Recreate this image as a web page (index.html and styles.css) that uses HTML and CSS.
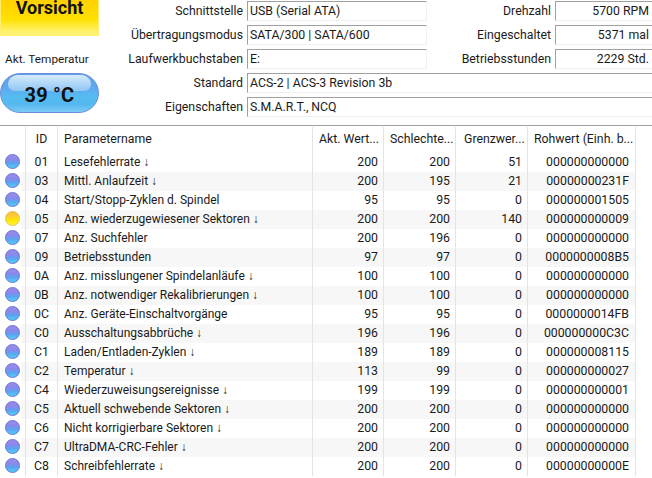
FILE: index.html
```html
<!DOCTYPE html>
<html lang="de">
<head>
<meta charset="utf-8">
<title>Laufwerk</title>
<link rel="stylesheet" href="styles.css">
</head>
<body>
<div class="top">
  <div class="status">
    <div class="health">Vorsicht</div>
    <div class="temp-label">Akt. Temperatur</div>
    <div class="temp"><span class="temp-text">39 °C</span></div>
  </div>
  <div class="info">
    <div class="info-row">
      <span class="lab">Schnittstelle</span><span class="field mid">USB (Serial ATA)</span>
      <span class="lab lab2">Drehzahl</span><span class="field num">5700 RPM</span>
    </div>
    <div class="info-row">
      <span class="lab">Übertragungsmodus</span><span class="field mid">SATA/300 | SATA/600</span>
      <span class="lab lab2">Eingeschaltet</span><span class="field num">5371 mal</span>
    </div>
    <div class="info-row">
      <span class="lab">Laufwerkbuchstaben</span><span class="field mid">E:</span>
      <span class="lab lab2">Betriebsstunden</span><span class="field num">2229 Std.</span>
    </div>
    <div class="info-row">
      <span class="lab">Standard</span><span class="field wide">ACS-2 | ACS-3 Revision 3b</span>
    </div>
    <div class="info-row">
      <span class="lab">Eigenschaften</span><span class="field wide">S.M.A.R.T., NCQ</span>
    </div>
  </div>
</div>
<div class="table">
  <div class="row head">
    <span class="c dot-c"></span><span class="c id">ID</span><span class="c name">Parametername</span><span class="c v1 r">Akt. Wert...</span><span class="c v2">Schlechte...</span><span class="c v3">Grenzwer...</span><span class="c raw">Rohwert (Einh. b...</span>
  </div>
  <div class="row"><span class="c dot-c"><i class="dot"></i></span><span class="c id">01</span><span class="c name">Lesefehlerrate ↓</span><span class="c v1 r">200</span><span class="c v2 r">200</span><span class="c v3 r">51</span><span class="c raw r">000000000000</span></div>
  <div class="row alt"><span class="c dot-c"><i class="dot"></i></span><span class="c id">03</span><span class="c name">Mittl. Anlaufzeit ↓</span><span class="c v1 r">200</span><span class="c v2 r">195</span><span class="c v3 r">21</span><span class="c raw r">00000000231F</span></div>
  <div class="row"><span class="c dot-c"><i class="dot"></i></span><span class="c id">04</span><span class="c name">Start/Stopp-Zyklen d. Spindel</span><span class="c v1 r">95</span><span class="c v2 r">95</span><span class="c v3 r">0</span><span class="c raw r">000000001505</span></div>
  <div class="row alt"><span class="c dot-c"><i class="dot warn"></i></span><span class="c id">05</span><span class="c name">Anz. wiederzugewiesener Sektoren ↓</span><span class="c v1 r">200</span><span class="c v2 r">200</span><span class="c v3 r">140</span><span class="c raw r">000000000009</span></div>
  <div class="row"><span class="c dot-c"><i class="dot"></i></span><span class="c id">07</span><span class="c name">Anz. Suchfehler</span><span class="c v1 r">200</span><span class="c v2 r">196</span><span class="c v3 r">0</span><span class="c raw r">000000000000</span></div>
  <div class="row alt"><span class="c dot-c"><i class="dot"></i></span><span class="c id">09</span><span class="c name">Betriebsstunden</span><span class="c v1 r">97</span><span class="c v2 r">97</span><span class="c v3 r">0</span><span class="c raw r">0000000008B5</span></div>
  <div class="row"><span class="c dot-c"><i class="dot"></i></span><span class="c id">0A</span><span class="c name">Anz. misslungener Spindelanläufe ↓</span><span class="c v1 r">100</span><span class="c v2 r">100</span><span class="c v3 r">0</span><span class="c raw r">000000000000</span></div>
  <div class="row alt"><span class="c dot-c"><i class="dot"></i></span><span class="c id">0B</span><span class="c name">Anz. notwendiger Rekalibrierungen ↓</span><span class="c v1 r">100</span><span class="c v2 r">100</span><span class="c v3 r">0</span><span class="c raw r">000000000000</span></div>
  <div class="row"><span class="c dot-c"><i class="dot"></i></span><span class="c id">0C</span><span class="c name">Anz. Geräte-Einschaltvorgänge</span><span class="c v1 r">95</span><span class="c v2 r">95</span><span class="c v3 r">0</span><span class="c raw r">0000000014FB</span></div>
  <div class="row alt"><span class="c dot-c"><i class="dot"></i></span><span class="c id">C0</span><span class="c name">Ausschaltungsabbrüche ↓</span><span class="c v1 r">196</span><span class="c v2 r">196</span><span class="c v3 r">0</span><span class="c raw r">000000000C3C</span></div>
  <div class="row"><span class="c dot-c"><i class="dot"></i></span><span class="c id">C1</span><span class="c name">Laden/Entladen-Zyklen ↓</span><span class="c v1 r">189</span><span class="c v2 r">189</span><span class="c v3 r">0</span><span class="c raw r">000000008115</span></div>
  <div class="row alt"><span class="c dot-c"><i class="dot"></i></span><span class="c id">C2</span><span class="c name">Temperatur ↓</span><span class="c v1 r">113</span><span class="c v2 r">99</span><span class="c v3 r">0</span><span class="c raw r">000000000027</span></div>
  <div class="row"><span class="c dot-c"><i class="dot"></i></span><span class="c id">C4</span><span class="c name">Wiederzuweisungsereignisse ↓</span><span class="c v1 r">199</span><span class="c v2 r">199</span><span class="c v3 r">0</span><span class="c raw r">000000000001</span></div>
  <div class="row alt"><span class="c dot-c"><i class="dot"></i></span><span class="c id">C5</span><span class="c name">Aktuell schwebende Sektoren ↓</span><span class="c v1 r">200</span><span class="c v2 r">200</span><span class="c v3 r">0</span><span class="c raw r">000000000000</span></div>
  <div class="row"><span class="c dot-c"><i class="dot"></i></span><span class="c id">C6</span><span class="c name">Nicht korrigierbare Sektoren ↓</span><span class="c v1 r">200</span><span class="c v2 r">200</span><span class="c v3 r">0</span><span class="c raw r">000000000000</span></div>
  <div class="row alt"><span class="c dot-c"><i class="dot"></i></span><span class="c id">C7</span><span class="c name">UltraDMA-CRC-Fehler ↓</span><span class="c v1 r">200</span><span class="c v2 r">200</span><span class="c v3 r">0</span><span class="c raw r">000000000000</span></div>
  <div class="row"><span class="c dot-c"><i class="dot"></i></span><span class="c id">C8</span><span class="c name">Schreibfehlerrate ↓</span><span class="c v1 r">200</span><span class="c v2 r">200</span><span class="c v3 r">0</span><span class="c raw r">00000000000E</span></div>
</div>
</body>
</html>
```
FILE: styles.css
```css
* { box-sizing: border-box; }
html, body { margin: 0; height: 100%; overflow: hidden; background: #fff; }
body { font-family: Roboto, "Noto Sans", sans-serif; font-size: 12.3px; color: #1a1a1a; width: 652px; height: 478px; }

.top { display: flex; height: 125px; }
.status { width: 99px; flex: none; display: flex; flex-direction: column; align-items: stretch; }
.health { height: 36px; text-align: center; font-weight: 700; font-size: 18px; line-height: 15px; color: #111;
  background: linear-gradient(#ffd000, #ffe000 55%, #fff060 85%, #fff27a);
  border: 1px solid #ffee70; border-top: 0; }
.temp-label { margin-top: 15px; height: 16px; line-height: 16px; padding-left: 5px; font-size: 11.8px; white-space: nowrap; }
.temp { position: relative; margin-top: 6px; height: 40px; width: 99px; border-radius: 20px; border: 1px solid #6d8fd8; text-align: center;
  font-weight: 700; font-size: 20px; line-height: 43px; color: #111; letter-spacing: 0.2px;
  background: linear-gradient(#5a9cee 0, #60a8f0 35%, #55bcf2 60%, #55b8f0 80%, #7ccaf6 100%); overflow: hidden; }
.temp::before { content: ""; position: absolute; left: 7px; right: 7px; top: 1px; height: 16px; border-radius: 14px 14px 10px 10px;
  background: linear-gradient(#d6eafb, #8fc6f5); }
.temp-text { position: relative; }

.info { flex: 1; padding-top: 1px; display: flex; flex-direction: column; gap: 4px; }
.info-row { display: flex; height: 20px; }
.lab { width: 148px; padding-right: 4px; text-align: right; line-height: 20px; flex: none; white-space: nowrap; }
.lab2 { width: 128px; }
.field { height: 20px; line-height: 18px; padding-left: 2px; border-top: 1px solid #a0a0a0; border-left: 1px solid #a0a0a0;
  border-right: 1px solid #f0f0f0; border-bottom: 1px solid #f0f0f0; white-space: nowrap; flex: none; }
.mid { width: 180px; }
.num { width: 97px; text-align: right; padding-right: 3px; border-right: 0; }
.wide { width: 405px; border-right: 0; }

.table { border-top: 1px solid #a0a0a0; padding-top: 1px; }
.row { display: flex; height: 19px; line-height: 19px; }
.head { height: 26px; line-height: 25px; }
.c { flex: none; white-space: nowrap; overflow: hidden; border-right: 1px solid #e4e4e4; padding: 0 2px 0 6px; }
.dot-c { width: 26px; padding: 0; display: flex; align-items: center; justify-content: center; background: #fff; height: 19px; overflow: visible; }
.head .dot-c { height: 26px; }
.id { width: 32px; text-align: center; padding: 0; }
.name { width: 255px; font-size: 12px; }
.head .name { font-size: 12.3px; }
.v1 { width: 71px; }
.v2 { width: 72px; }
.v3 { width: 72px; }
.raw { width: 108px; }
.r { text-align: right; padding-right: 5px; }
.raw.r { padding-right: 6px; }
.head .v3 { padding-left: 8px; }
.alt .c:not(.dot-c) { background: #f7f7f7; }
.alt .dot-c { background: linear-gradient(90deg, #fff 21px, #f7f7f7 21px); }
.dot { display: block; width: 15px; height: 15px; margin-bottom: 2px; border-radius: 50%; border: 1px solid #6a6fd4;
  background: linear-gradient(#9a8cee 0, #8c88ea 35%, #5aa4f0 65%, #50d0f8 100%); }
.warn { border-color: #e8c040; background: linear-gradient(#f8b848 0, #ffd030 35%, #ffe800 65%, #fff640 100%); }
```
